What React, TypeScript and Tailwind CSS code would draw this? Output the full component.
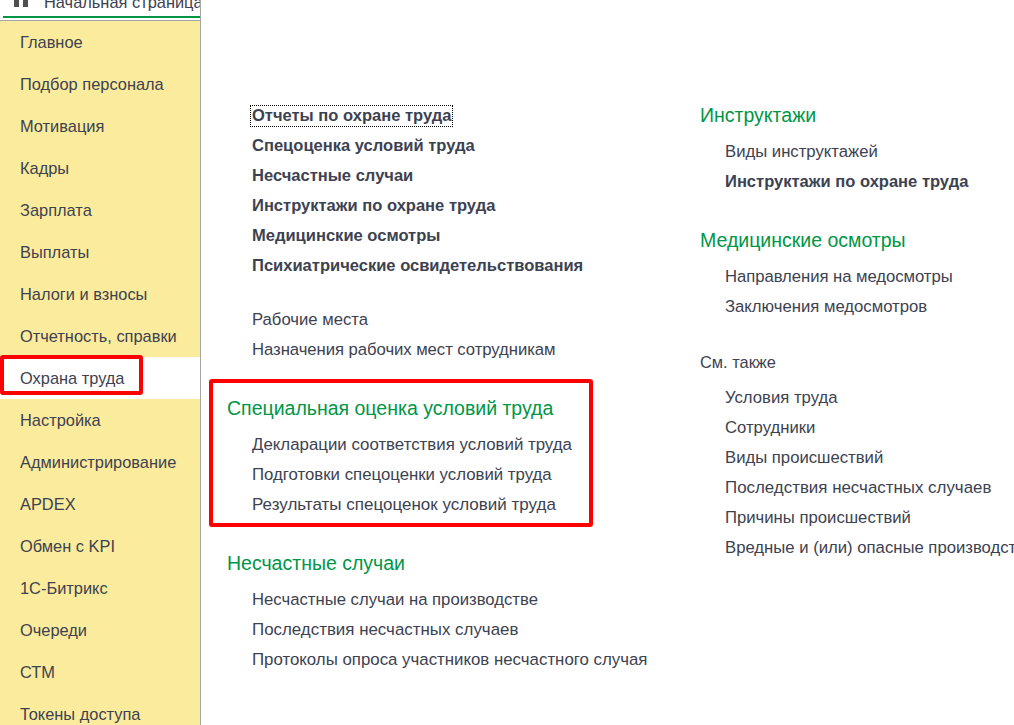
const nav = ["Главное","Подбор персонала","Мотивация","Кадры","Зарплата","Выплаты","Налоги и взносы","Отчетность, справки","Охрана труда","Настройка","Администрирование","APDEX","Обмен с KPI","1С-Битрикс","Очереди","СТМ","Токены доступа"];

function L({ t, b, focus, size = "text-[16.7px]" }: { t: string; b?: boolean; focus?: boolean; size?: string }) {
  return (
    <div className={"h-[30px] flex items-center whitespace-nowrap pl-[25px] " + (b ? "font-bold text-[16.55px] " : size + " ") + (b && !focus ? "pt-[2px]" : "pt-[1px]")}>
      {focus ? <span className="-mx-[2px] px-[1px] border border-dotted border-black leading-[20px]">{t}</span> : t}
    </div>
  );
}
function H({ t, className = "" }: { t: string; className?: string }) {
  return <div className={"h-[30px] pt-[2px] flex items-center whitespace-nowrap text-[19.5px] text-[#009646] " + className}>{t}</div>;
}

export default function App() {
  return (
    <div className="w-[1014px] h-[725px] overflow-hidden bg-white flex text-[16.4px] text-[#3d4250] font-['Liberation_Sans',Arial,sans-serif]">
      <aside className="w-[201px] shrink-0 flex flex-col border-r border-[#a6a6a6]">
        <div className="h-[21px] shrink-0 border-b border-[#a6a6a6] overflow-hidden">
          <div className="h-[18px] ml-[3px] border-b-[2px] border-[#009646] flex items-start pl-[11px] gap-[16px] whitespace-nowrap overflow-hidden">
            <div className="flex gap-[4px] shrink-0 h-[7px]">
              <div className="w-[5px] bg-[#4f4f4f]" />
              <div className="w-[5px] bg-[#4f4f4f]" />
            </div>
            <span className="leading-[16px] -mt-[6px]">Начальная страница</span>
          </div>
        </div>
        <nav className="flex-1 bg-[#fbeb9d]">
          {nav.map((n) => (
            <div key={n} className={"relative h-[42px] pt-[1px] flex items-center pl-[20px] whitespace-nowrap " + (n === "Охрана труда" ? "bg-white" : "")}>
              {n}
              {n === "Охрана труда" && (
                <div className="absolute left-0 -top-[2px] w-[143px] h-[40px] border-[4px] border-[#ff0000] rounded-[3px]" />
              )}
            </div>
          ))}
        </nav>
      </aside>
      <main className="flex-1 flex pt-[100px] overflow-hidden">
        <div className="w-[499px] shrink-0 pl-[26px]">
          <L t="Отчеты по охране труда" b focus />
          <L t="Спецоценка условий труда" b />
          <L t="Несчастные случаи" b />
          <L t="Инструктажи по охране труда" b />
          <L t="Медицинские осмотры" b />
          <L t="Психиатрические освидетельствования" b />
          <div className="h-[24px]" />
          <L t="Рабочие места" />
          <L t="Назначения рабочих мест сотрудникам" size="text-[16.7px] tracking-[-0.05px]" />
          <div className="relative mt-[29px]">
            <div className="absolute -left-[18px] -top-[14px] w-[384px] h-[148px] border-[4px] border-[#ff0000] rounded-[3px]" />
            <H t="Специальная оценка условий труда" />
            <div className="h-[6px]" />
            <L t="Декларации соответствия условий труда" size="text-[16.85px]" />
            <L t="Подготовки спецоценки условий труда" size="text-[16.8px]" />
            <L t="Результаты спецоценок условий труда" size="text-[17px]" />
          </div>
          <H t="Несчастные случаи" className="mt-[29px]" />
          <div className="h-[6px]" />
          <L t="Несчастные случаи на производстве" />
          <L t="Последствия несчастных случаев" size="text-[16.9px]" />
          <L t="Протоколы опроса участников несчастного случая" size="text-[16.83px]" />
        </div>
        <div className="flex-1 min-w-0">
          <H t="Инструктажи" />
          <div className="h-[6px]" />
          <L t="Виды инструктажей" />
          <L t="Инструктажи по охране труда" b />
          <H t="Медицинские осмотры" className="mt-[29px]" />
          <div className="h-[6px]" />
          <L t="Направления на медосмотры" size="text-[16.7px] tracking-[-0.05px]" />
          <L t="Заключения медосмотров" />
          <div className="mt-[26px] h-[30px] pt-[1px] flex items-center">См. также</div>
          <div className="h-[5px]" />
          <L t="Условия труда" />
          <L t="Сотрудники" />
          <L t="Виды происшествий" />
          <L t="Последствия несчастных случаев" size="text-[16.9px]" />
          <L t="Причины происшествий" />
          <L t="Вредные и (или) опасные производственные факторы" />
        </div>
      </main>
    </div>
  );
}
